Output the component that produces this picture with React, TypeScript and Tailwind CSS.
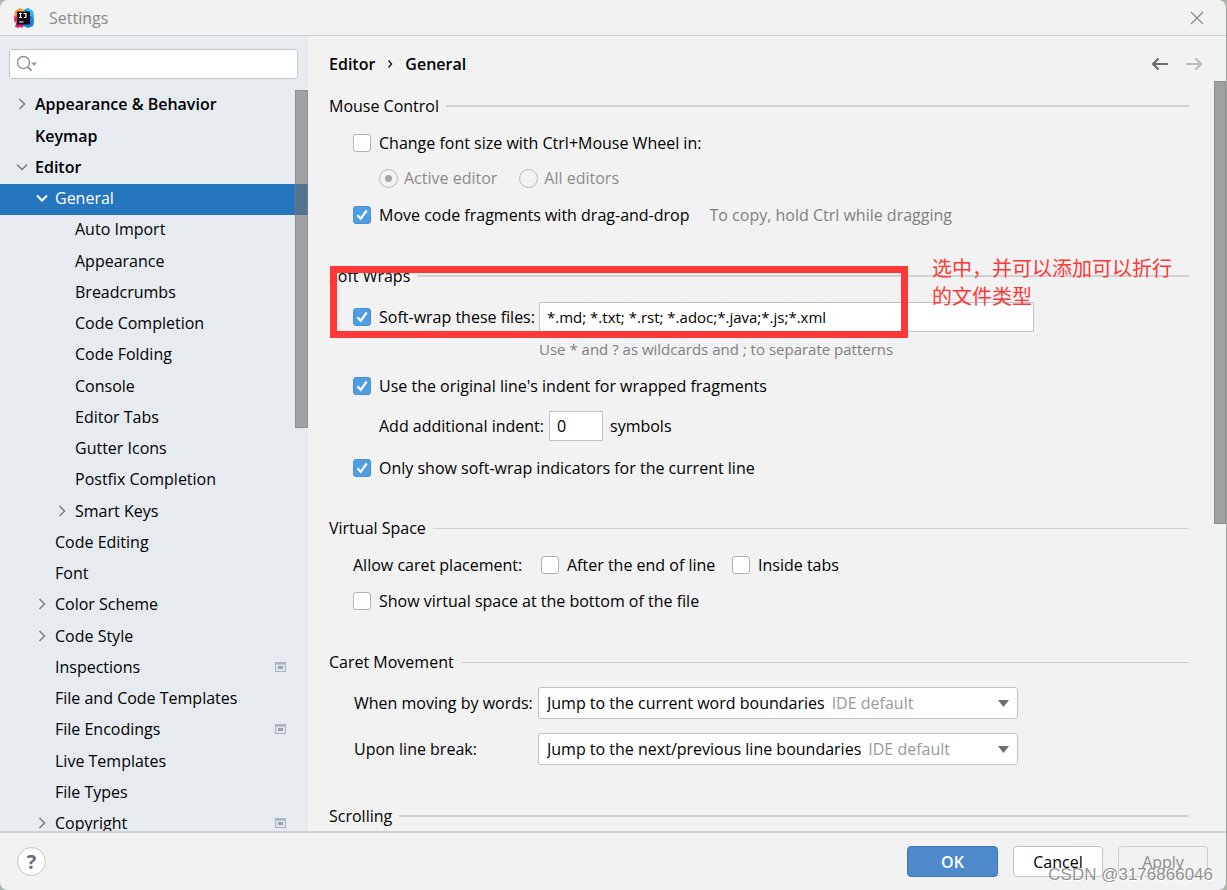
import React, { useState } from 'react';

type TreeItem = {
  label: string;
  level: number;
  state?: 'open' | 'closed';
  project?: boolean;
};

const TREE: TreeItem[] = [
  { label: 'Appearance & Behavior', level: 0, state: 'closed' },
  { label: 'Keymap', level: 0 },
  { label: 'Editor', level: 0, state: 'open' },
  { label: 'General', level: 1, state: 'open' },
  { label: 'Auto Import', level: 2 },
  { label: 'Appearance', level: 2 },
  { label: 'Breadcrumbs', level: 2 },
  { label: 'Code Completion', level: 2 },
  { label: 'Code Folding', level: 2 },
  { label: 'Console', level: 2 },
  { label: 'Editor Tabs', level: 2 },
  { label: 'Gutter Icons', level: 2 },
  { label: 'Postfix Completion', level: 2 },
  { label: 'Smart Keys', level: 2, state: 'closed' },
  { label: 'Code Editing', level: 1 },
  { label: 'Font', level: 1 },
  { label: 'Color Scheme', level: 1, state: 'closed' },
  { label: 'Code Style', level: 1, state: 'closed' },
  { label: 'Inspections', level: 1, project: true },
  { label: 'File and Code Templates', level: 1 },
  { label: 'File Encodings', level: 1, project: true },
  { label: 'Live Templates', level: 1 },
  { label: 'File Types', level: 1 },
  { label: 'Copyright', level: 1, state: 'closed', project: true },
];

const INDENT = ['pl-[14px]', 'pl-[34px]', 'pl-[54px]'];

function AppLogo(): React.JSX.Element {
  return (
    <svg className="h-5 w-5" viewBox="0 0 20 20">
      <path d="M1 3 6 0l4 2-3 8-6 1-1-3 1-2z" fill="#fb8c3c" />
      <path d="M6 0 11 2 8 5 4 5z" fill="#f8b040" />
      <path d="M0 9 4 7l4 9-3 4-4-1 1-4-2-2z" fill="#f0306c" />
      <path d="M2 15h10l-4 5-3-2-3 1z" fill="#d0207c" />
      <path d="M10 2 14 0 19 4 20 14 19 18 14 20 9 18 14 10z" fill="#1480e8" />
      <path d="M12 1 14 0 19 3 20 9 16 8z" fill="#28b8f0" />
      <rect x="3" y="3.500" width="13" height="13" fill="#150a10" />
      <path d="M5 5.500h3M6.500 5.500v4M5 9.500h3M9.500 5.500h2.500v3.200q0 .8-1 .8h-1.200M5 14h4.500" fill="none" stroke="#fff" strokeWidth="1.200" />
    </svg>
  );
}

function Chevron({ open, light }: { open: boolean; light: boolean }): React.JSX.Element {
  return (
    <svg className={`h-4 w-4 ${light ? 'text-white' : 'text-[#7f8285]'}`} viewBox="0 0 16 16" fill="none" stroke="currentColor" strokeWidth={light ? 2 : 1.6}>
      <path d={open ? 'M3 5.500l5 5 5-5' : 'M5.500 3l5 5-5 5'} />
    </svg>
  );
}

function ProjectIcon(): React.JSX.Element {
  return (
    <svg className="h-[10px] w-[11px]" viewBox="0 0 11 10">
      <path d="M0 0h11v10H0z" fill="#a9b4be" />
      <path d="M1 2.500h9V9H1z" fill="#dde4ea" />
      <path d="M3 4h5v3H3z" fill="#98a4af" />
    </svg>
  );
}

function Checkbox({ label, defaultChecked, className = '' }: { label: string; defaultChecked?: boolean; className?: string }): React.JSX.Element {
  return (
    <label className={`flex items-center gap-2 ${className}`}>
      <span className="grid h-[18px] w-[18px] shrink-0">
        <input
          type="checkbox"
          defaultChecked={defaultChecked}
          className="peer col-start-1 row-start-1 h-[18px] w-[18px] appearance-none rounded-[3px] border border-[#b0b0b0] bg-white checked:border-[#4a90d6] checked:bg-[#4f9ee3]"
        />
        <svg className="pointer-events-none invisible col-start-1 row-start-1 h-[18px] w-[18px] peer-checked:visible" viewBox="0 0 18 18" fill="none" stroke="#fff" strokeWidth="2.200">
          <path d="M4.500 9.200l3.200 3.600 6-8.300" />
        </svg>
      </span>
      <span>{label}</span>
    </label>
  );
}

function Radio({ label, defaultChecked }: { label: string; defaultChecked?: boolean }): React.JSX.Element {
  return (
    <label className="flex items-center gap-[6px] text-[#8c8c8c]">
      <span className="grid h-[19px] w-[19px] shrink-0 place-items-center">
        <input
          type="radio"
          name="zoom-scope"
          disabled
          defaultChecked={defaultChecked}
          className="peer col-start-1 row-start-1 h-[19px] w-[19px] appearance-none rounded-full border border-[#bcbcbc]"
        />
        <span className="invisible col-start-1 row-start-1 h-[7px] w-[7px] rounded-full bg-[#a6a6a6] peer-checked:visible" />
      </span>
      {label}
    </label>
  );
}

function SectionTitle({ title, thin, className = '' }: { title: string; thin?: boolean; className?: string }): React.JSX.Element {
  return (
    <div className={`flex h-6 items-center gap-[7px] ${className}`}>
      <h2>{title}</h2>
      <div className={`flex-1 bg-[#d1d1d1] ${thin ? 'h-px' : 'h-[2px]'}`} />
    </div>
  );
}

function Combo({ id, label, value, className = '' }: { id: string; label: string; value: string; className?: string }): React.JSX.Element {
  return (
    <div className={`flex items-center ${className}`}>
      <label htmlFor={id} className="w-[184px]">{label}</label>
      <div className="flex h-8 w-[480px] items-center rounded-[3px] border border-[#c2c2c2] bg-white pr-2 pl-2">
        <select id={id} className="field-sizing-content appearance-none bg-transparent">
          <option>{value}</option>
        </select>
        <span className="ml-[7px] text-[#999999]">IDE default</span>
        <svg className="ml-auto h-[7px] w-[11px]" viewBox="0 0 11 7">
          <path d="M0 0h11L5.500 7z" fill="#6e6e6e" />
        </svg>
      </div>
    </div>
  );
}

function Sidebar(): React.JSX.Element {
  const [selected, setSelected] = useState('General');

  return (
    <aside className="relative w-[308px] shrink-0 overflow-hidden bg-[#e6ebf0]">
      <div className="mt-[13px] mr-[10px] mb-[11px] ml-[9px] flex h-[30px] items-center rounded-[3px] border border-[#c2c5c8] bg-white pl-[7px]">
        <svg className="h-5 w-5 shrink-0" viewBox="0 0 20 20" fill="none" stroke="#8f989f" strokeWidth="1.500">
          <circle cx="6.500" cy="8.500" r="6" />
          <path d="M11 13l3.500 3.500" strokeWidth="2" />
          <path d="M14 8.500h6l-3 3.500z" fill="#8f989f" stroke="none" />
        </svg>
        <input type="text" aria-label="Search settings" className="ml-1 w-full min-w-0 bg-transparent outline-none" />
      </div>

      <ul>
        {TREE.map((item) => {
          const active = item.label === selected;
          return (
            <li key={item.label} className="nth-[4n+1]:mb-px">
              <button
                type="button"
                onClick={() => setSelected(item.label)}
                className={`flex h-[31px] w-full items-center gap-[5px] pr-[22px] pb-[3px] text-left ${INDENT[item.level]} ${item.level === 0 ? 'font-semibold' : ''} ${active ? 'bg-[#2675bf] text-white' : ''}`}
              >
                <span className="h-4 w-4 shrink-0">
                  {item.state && <Chevron open={item.state === 'open'} light={active} />}
                </span>
                <span className="flex-1">{item.label}</span>
                {item.project && <ProjectIcon />}
              </button>
            </li>
          );
        })}
      </ul>

      {/* Scrollbar thumb */}
      <div className="absolute top-[54px] right-0 h-[338px] w-[13px] border border-[#808080]/60 bg-[#707070]/60" />
    </aside>
  );
}

function Content(): React.JSX.Element {
  return (
    <main className="relative min-w-0 flex-1 overflow-hidden pt-4 pr-[37px] pl-[21px]">
      <div className="flex h-6 items-center">
        <nav className="flex items-center font-semibold">
          <span>Editor</span>
          <svg className="mx-3 h-2 w-[6px]" viewBox="0 0 6 8" fill="none" stroke="#222" strokeWidth="1.500">
            <path d="M1.500 .5 4.500 4l-3 3.500" />
          </svg>
          <span>General</span>
        </nav>
        <div className="-mr-[14px] ml-auto flex gap-4">
          <button type="button" aria-label="Back" className="text-[#6e6e6e]">
            <svg className="h-[18px] w-[18px]" viewBox="0 0 18 18" fill="none" stroke="currentColor" strokeWidth="2.200">
              <path d="M17 9H2M7.500 3.500 2 9l5.500 5.500" />
            </svg>
          </button>
          <button type="button" aria-label="Forward" className="text-[#bcbcbc]">
            <svg className="h-[18px] w-[18px]" viewBox="0 0 18 18" fill="none" stroke="currentColor" strokeWidth="2.200">
              <path d="M1 9h15M10.500 3.500 16 9l-5.500 5.500" />
            </svg>
          </button>
        </div>
      </div>

      <SectionTitle title="Mouse Control" className="mt-[18px]" />
      <div className="pl-[24px]">
        <Checkbox label="Change font size with Ctrl+Mouse Wheel in:" className="mt-[9px] h-8" />
        <div className="mt-[3px] flex h-8 items-center gap-[22px] pl-[26px]">
          <Radio label="Active editor" defaultChecked />
          <Radio label="All editors" />
        </div>
        <div className="mt-[5px] flex h-8 items-center gap-5">
          <Checkbox label="Move code fragments with drag-and-drop" defaultChecked />
          <span className="text-[#808080]">To copy, hold Ctrl while dragging</span>
        </div>
      </div>

      <SectionTitle title="Soft Wraps" className="mt-[33px]" />
      <div className="pl-[24px]">
        <div className="mt-[13px] flex h-8 items-center">
          <Checkbox label="Soft-wrap these files:" defaultChecked className="w-[186px]" />
          <input
            type="text"
            aria-label="Soft-wrap file patterns"
            defaultValue="*.md; *.txt; *.rst; *.adoc;*.java;*.js;*.xml"
            className="h-[30px] w-[495px] border border-[#c4c4c4] bg-white px-[7px] text-[15px]"
          />
        </div>
        <p className="mt-[4px] h-6 pl-[186px] text-[15px] leading-6 text-[#808080]">Use * and ? as wildcards and ; to separate patterns</p>
        <Checkbox label="Use the original line's indent for wrapped fragments" defaultChecked className="mt-[9px] h-8" />
        <div className="mt-[8px] flex h-8 items-center pl-[26px]">
          <label htmlFor="indent" className="w-[170px]">Add additional indent:</label>
          <input id="indent" type="text" defaultValue="0" className="h-[30px] w-[54px] border border-[#c4c4c4] bg-white px-[7px]" />
          <span className="ml-[7px]">symbols</span>
        </div>
        <Checkbox label="Only show soft-wrap indicators for the current line" defaultChecked className="mt-[10px] h-8" />
      </div>

      <SectionTitle title="Virtual Space" thin className="mt-[32px]" />
      <div className="pl-[24px]">
        <div className="mt-[9px] flex h-8 items-center">
          <span className="w-[188px]">Allow caret placement:</span>
          <Checkbox label="After the end of line" className="w-[191px]" />
          <Checkbox label="Inside tabs" />
        </div>
        <Checkbox label="Show virtual space at the bottom of the file" className="mt-[4px] h-8" />
      </div>

      <SectionTitle title="Caret Movement" thin className="mt-[33px]" />
      <div className="pl-[25px]">
        <Combo id="by-words" label="When moving by words:" value="Jump to the current word boundaries" className="mt-[13px]" />
        <Combo id="line-break" label="Upon line break:" value="Jump to the next/previous line boundaries" className="mt-[14px]" />
      </div>

      <SectionTitle title="Scrolling" className="mt-[39px]" />

      {/* Highlight around the soft-wrap option */}
      <div className="pointer-events-none absolute top-[230px] left-[22px] h-[72px] w-[578px] border-7 border-[#fd3838]" />
      <p className="absolute top-[218px] left-[624px] w-[240px] font-['Noto_Sans_CJK_SC',sans-serif] text-[20px] leading-7 text-[#fd3838]">
        选中，并可以添加可以折行的文件类型
      </p>

      {/* Scrollbar thumb */}
      <div className="absolute top-[45px] right-0 h-[443px] w-[12px] border border-[#8c8c8c] bg-[#a0a0a0]" />
    </main>
  );
}

function App(): React.JSX.Element {
  return (
    <div className="bg-[#a9b8ab]">
      <div className="flex h-screen flex-col overflow-hidden rounded-lg border-r border-[#9aa79c] bg-[#f2f2f2] font-['Open_Sans',sans-serif] text-[16px] leading-6 text-black">
        <header className="flex h-9 shrink-0 items-center border-b border-[#cdd0d3] pr-[22px] pl-[14px]">
          <AppLogo />
          <h1 className="ml-[15px] text-[#8b8b8b]">Settings</h1>
          <button type="button" aria-label="Close" className="ml-auto">
            <svg className="h-[14px] w-[14px]" viewBox="0 0 14 14" fill="none" stroke="#8b8b8b" strokeWidth="1.300">
              <path d="M1 1l12 12M13 1 1 13" />
            </svg>
          </button>
        </header>

        <div className="flex min-h-0 flex-1">
          <Sidebar />
          <Content />
        </div>

        <footer className="relative flex h-[59px] shrink-0 items-center gap-[15px] border-t-2 border-[#d1d1d1] pr-[18px] pl-[17px]">
          <button type="button" aria-label="Help" className="mr-auto flex h-[29px] w-[29px] items-center justify-center rounded-full border border-[#c4c4c4] bg-white text-[20px] font-bold text-[#6e6e6e]">
            ?
          </button>
          <button type="button" className="h-[31px] w-[91px] rounded-[4px] border border-[#3d75b3] bg-[#4e8aca] font-semibold text-white">OK</button>
          <button type="button" className="h-[31px] w-[90px] rounded-[4px] border border-[#c4c4c4] bg-white">Cancel</button>
          <button type="button" disabled className="h-[31px] w-[90px] rounded-[4px] border border-[#cfcfcf] text-[#8c8c8c]">Apply</button>
          <span className="pointer-events-none absolute right-[13px] bottom-[3px] font-['Liberation_Sans',sans-serif] text-[17px] text-[#777777]/80 [text-shadow:1px_1px_0_#fff]">
            CSDN @3176866046
          </span>
        </footer>
      </div>
    </div>
  );
}

export default App;
